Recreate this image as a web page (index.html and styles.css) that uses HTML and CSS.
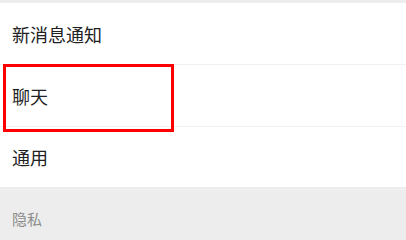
FILE: index.html
```html
<!DOCTYPE html>
<html lang="zh">
<head>
<meta charset="utf-8">
<link rel="stylesheet" href="styles.css">
</head>
<body>
<div class="screen">
  <div class="gap-top"></div>
  <div class="list">
    <div class="row">新消息通知</div>
    <div class="row">聊天</div>
    <div class="row last">通用</div>
  </div>
  <div class="section">
    <div class="section-line"></div>
    <div class="section-title">隐私</div>
  </div>
  <div class="highlight"></div>
</div>
</body>
</html>
```
FILE: styles.css
```css
html, body {
  margin: 0;
  padding: 0;
  background: #ededed;
}
.screen {
  position: relative;
  width: 406px;
  height: 229px;
  overflow: hidden;
  font-family: "Noto Sans CJK SC", "Noto Sans", sans-serif;
  background: #ededed;
}
.gap-top {
  height: 3px;
  background: #ededed;
}
.list {
  background: #fff;
  display: flex;
  flex-direction: column;
}
.row {
  height: 61px;
  display: flex;
  align-items: center;
  padding-left: 12px;
  font-size: 18px;
  color: #222;
  border-bottom: 1px solid #f1f1f1;
}
.row.last {
  height: 60px;
  border-bottom: none;
}
.section {
  display: flex;
  flex-direction: column;
}
.section-line {
  height: 1px;
  margin-top: 2px;
  background: #f1f1f1;
}
.section-title {
  padding: 19px 0 0 12px;
  font-size: 15px;
  line-height: 20px;
  color: #8c8c8c;
}
.highlight {
  position: absolute;
  left: 3px;
  top: 64px;
  width: 165px;
  height: 62px;
  border: 3px solid #f00;
}
```
